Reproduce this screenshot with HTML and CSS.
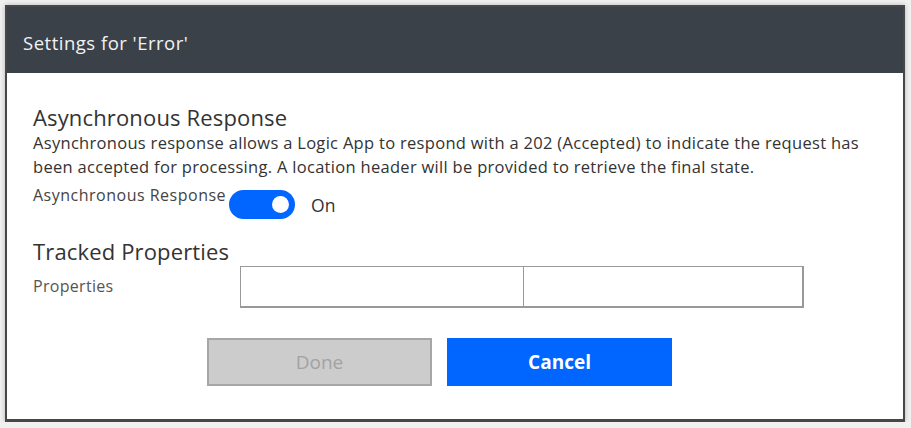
FILE: index.html
```html
<!DOCTYPE html>
<html>
<head>
<meta charset="utf-8">
<link rel="stylesheet" href="styles.css">
</head>
<body>
<div class="dialog">
  <div class="header"><span class="title">Settings for 'Error'</span></div>
  <div class="content">
    <h2 class="section-title">Asynchronous Response</h2>
    <p class="desc">Asynchronous response allows a Logic App to respond with a 202 (Accepted) to indicate the request has been accepted for processing. A location header will be provided to retrieve the final state.</p>
    <div class="toggle-row">
      <span class="label">Asynchronous Response</span>
      <span class="toggle"><span class="knob"></span></span>
      <span class="toggle-text">On</span>
    </div>
    <h2 class="section-title">Tracked Properties</h2>
    <div class="prop-row">
      <span class="label prop-label">Properties</span>
      <div class="prop-box">
        <div class="cell"></div>
        <div class="cell"></div>
      </div>
    </div>
    <div class="buttons">
      <button class="btn done">Done</button>
      <button class="btn cancel">Cancel</button>
    </div>
  </div>
</div>
</body>
</html>
```
FILE: styles.css
```css
html, body {
  margin: 0;
  padding: 0;
  background: #f1f1f1;
  font-family: "Open Sans", "Noto Sans", sans-serif;
}
.dialog {
  box-sizing: border-box;
  margin: 5px 0 0 5px;
  width: 900px;
  height: 417px;
  border: 2px solid #474747;
  border-bottom-width: 3px;
  background: #fff;
  box-shadow: 0 0 5px rgba(0,0,0,0.25);
  display: flex;
  flex-direction: column;
}
.header {
  box-sizing: border-box;
  height: 66px;
  background: #3b4149;
  display: flex;
  align-items: flex-start;
  padding: 23px 0 0 16px;
}
.title {
  color: #f2f2f2;
  font-size: 18.5px;
  line-height: 25px;
  letter-spacing: 0.5px;
}
.content {
  padding: 30px 26px 0 26px;
  color: #333;
}
.section-title {
  margin: 0;
  font-weight: normal;
  font-size: 22px;
  line-height: 28px;
  color: #333;
  letter-spacing: 0.15px;
}
.desc {
  margin: 0;
  font-size: 16.5px;
  line-height: 23.5px;
  color: #333;
  letter-spacing: 0.3px;
}
.toggle-row {
  display: flex;
  align-items: flex-start;
  height: 59px;
  box-sizing: border-box;
  padding-top: 6px;
}
.label {
  font-size: 16px;
  line-height: 22px;
  color: #444;
  letter-spacing: 0.5px;
}
.toggle {
  width: 66px;
  height: 29px;
  border-radius: 15px;
  background: #0066ff;
  margin-top: 6px;
  margin-left: 3px;
  display: flex;
  align-items: center;
  justify-content: flex-end;
  padding-right: 6px;
  box-sizing: border-box;
}
.knob {
  width: 17px;
  height: 17px;
  border-radius: 50%;
  background: #fff;
}
.toggle-text {
  font-size: 17.5px;
  color: #333;
  margin-left: 16px;
  margin-top: 10px;
  line-height: 22px;
}
.prop-row {
  display: flex;
  align-items: flex-start;
  margin-top: 1px;
}
.prop-label {
  color: #555;
  width: 207px;
  margin-top: 9px;
  letter-spacing: 0.3px;
}
.prop-box {
  width: 564px;
  height: 42px;
  box-sizing: border-box;
  border: 1px solid #999;
  border-right-width: 2px;
  border-bottom-width: 2px;
  display: flex;
}
.cell {
  flex: 0 0 282px;
  border-right: 1px solid #999;
}
.cell:last-child {
  border-right: none;
  flex: 1;
}
.buttons {
  display: flex;
  gap: 15px;
  margin-top: 30px;
  padding-left: 174px;
}
.btn {
  width: 225px;
  height: 48px;
  font-family: inherit;
  font-size: 19px;
  box-sizing: border-box;
  cursor: pointer;
}
.done {
  background: #cccccc;
  border: 2px solid #a6a6a6;
  color: #a2a2a2;
}
.cancel {
  background: #0066ff;
  border: none;
  color: #fff;
  font-weight: bold;
}
```
